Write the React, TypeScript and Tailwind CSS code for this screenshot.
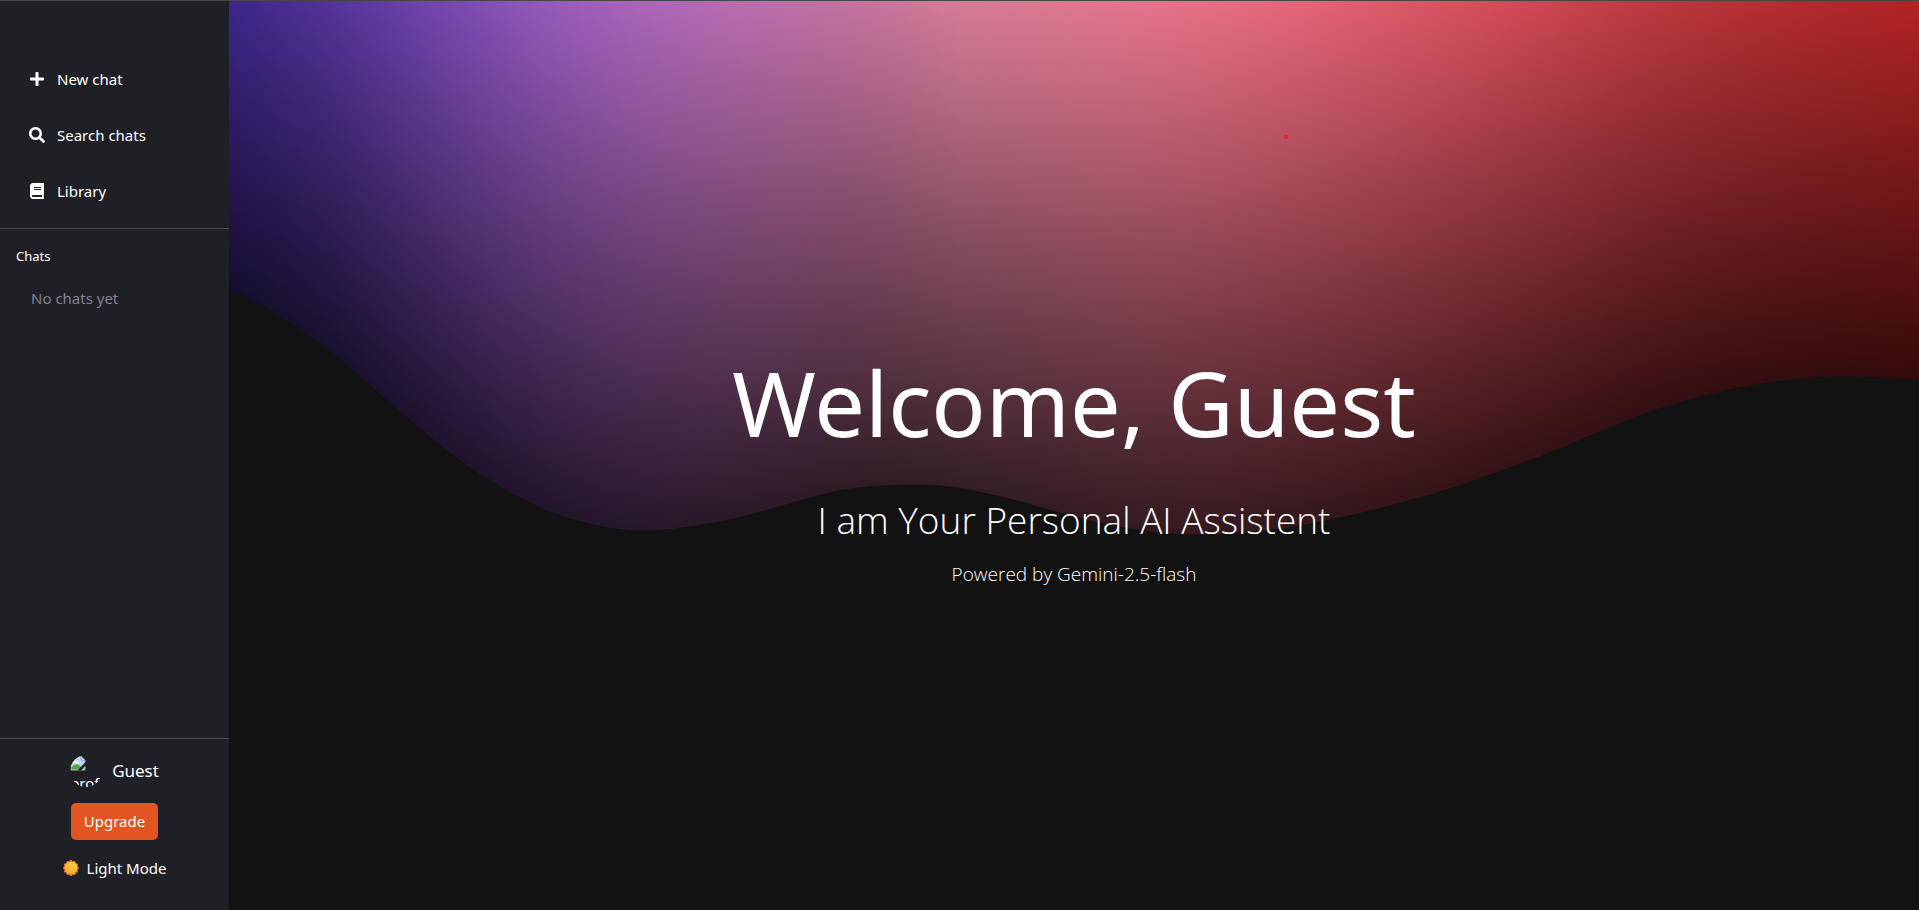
import React from "react";
import { FaBook, FaPlus, FaSearch } from "react-icons/fa";

const VIEW_W = 1919;
const VIEW_H = 910;
const BAND = 3;

// Lower edge of the aurora, left to right.
const EDGE: [number, number][] = [
  [0, 262], [60, 258], [120, 260], [180, 271], [229, 289], [253, 300], [287, 320],
  [327, 348], [370, 385], [420, 428], [470, 467], [520, 497], [570, 518],
  [637, 530], [720, 521], [800, 500], [833, 491], [867, 486], [910, 484],
  [950, 486], [983, 492], [1017, 500], [1067, 514], [1120, 526], [1197, 534],
  [1300, 525], [1430, 494], [1537, 457], [1600, 431], [1650, 411], [1700, 396],
  [1750, 385], [1800, 378], [1850, 376], [1919, 379],
];

// Smooth curve through the edge points, closed far above the view's top.
function wavePath(points: [number, number][]) {
  const at = (i: number) => points[Math.max(0, Math.min(points.length - 1, i))];
  let d = `M0 -20 V${points[0][1]}`;
  for (let i = 0; i < points.length - 1; i++) {
    const [x0, y0] = at(i - 1);
    const [x1, y1] = at(i);
    const [x2, y2] = at(i + 1);
    const [x3, y3] = at(i + 2);
    const s1 = (y2 - y0) / (x2 - x0);
    const s2 = (y3 - y1) / (x3 - x1);
    const t = (x2 - x1) / 3;
    d += ` C${x1 + t} ${y1 + s1 * t} ${x2 - t} ${y2 - s2 * t} ${x2} ${y2}`;
  }
  return `${d} V-1000 H0 Z`;
}

const WAVE = wavePath(EDGE);
const BANDS = Array.from({ length: 180 }, (_, i) => i * BAND);

function Aurora() {
  return (
    <svg
      className="absolute inset-0 h-full w-full"
      viewBox={`0 0 ${VIEW_W} ${VIEW_H}`}
      preserveAspectRatio="none"
      aria-hidden="true"
    >
      <defs>
        <linearGradient id="ramp" x1="0" x2="1" y1="0" y2="0">
          <stop offset="0" stopColor="#3a29ff" />
          <stop offset="0.5" stopColor="#ff94b4" />
          <stop offset="1" stopColor="#ff3232" />
        </linearGradient>
        <path id="wave" d={WAVE} />
        <mask id="glow" maskUnits="userSpaceOnUse" x="0" y="0" width={VIEW_W} height={VIEW_H}>
          {BANDS.map((s) => {
            const level = Math.round((0.2 + (1.2 * (s + BAND / 2)) / VIEW_H) * 255);
            return <use key={s} href="#wave" y={-s} fill={`rgb(${level},${level},${level})`} />;
          })}
        </mask>
      </defs>
      <use href="#wave" fill="#000" />
      <rect width={VIEW_W} height={VIEW_H} fill="url(#ramp)" mask="url(#glow)" />
    </svg>
  );
}

function BrokenImage() {
  return (
    <svg className="block size-4" viewBox="0 0 16 16" aria-hidden="true">
      <path d="M1 1h10l4 4v10H1z" fill="#c3d5f7" stroke="#a9b0b8" />
      <path d="M11 1v4h4z" fill="#fff" stroke="#8d9299" />
      <path d="M3.5 7.5a1.8 1.8 0 0 1 3-1.2 2 2 0 0 1 2.5 2H3.5z" fill="#fff" />
      <path d="M1.5 14.5v-2C4 8.5 8 8.5 10 11l4.5 3.5z" fill="#56a83c" />
      <path d="M16 6.5 7.5 15.5H11l5-5z" fill="#1f2025" />
      <path d="M15 11v4h-3.5z" fill="#a9b0b8" />
    </svg>
  );
}

function Sun() {
  const petals = Array.from({ length: 12 }, (_, i) => (i * Math.PI) / 6);
  return (
    <svg className="size-4" viewBox="0 0 16 16" aria-hidden="true">
      <defs>
        <linearGradient id="sun" x1="0.8" y1="0.1" x2="0.3" y2="1">
          <stop offset="0" stopColor="#ffd23c" />
          <stop offset="1" stopColor="#eda62f" />
        </linearGradient>
      </defs>
      {petals.map((a) => (
        <circle key={a} cx={8 + 6.2 * Math.cos(a)} cy={8 + 6.2 * Math.sin(a)} r="1.7" fill="#ee7f33" />
      ))}
      <circle cx="8" cy="8" r="6.2" fill="url(#sun)" />
    </svg>
  );
}

const NAV = [
  { label: "New chat", Icon: FaPlus },
  { label: "Search chats", Icon: FaSearch },
  { label: "Library", Icon: FaBook },
];

function Sidebar() {
  return (
    <aside className="relative flex w-[229px] shrink-0 flex-col bg-[#1f2025]">
      <nav className="flex flex-col gap-4 border-b border-[#4c4d51] px-5 pt-[58px] pb-[17px]">
        {NAV.map(({ label, Icon }) => (
          <button key={label} type="button" className="flex h-10 items-center gap-[11px] px-2 text-left">
            <span className="flex w-[18px] justify-center">
              <Icon className="size-4" />
            </span>
            {label}
          </button>
        ))}
      </nav>
      <section className="flex-1 px-4 pt-[15px]">
        <h2 className="text-[13px] leading-6">Chats</h2>
        <p className="px-[15px] pt-4 leading-7 text-[#7f8098]">No chats yet</p>
      </section>
      <footer className="flex flex-col items-center border-t border-[#4c4d51] pt-4 pb-[30px]">
        <div className="flex items-center gap-[10px]">
          <div className="size-8 overflow-hidden rounded-full">
            <BrokenImage />
            <span className="block leading-6">prof</span>
          </div>
          <span className="text-[17px] leading-8">Guest</span>
        </div>
        <button type="button" className="mt-4 h-[37px] rounded-[5px] bg-[#e25420] px-[13px]">
          Upgrade
        </button>
        <button type="button" className="mt-4 flex h-6 items-center gap-2">
          <Sun />
          Light Mode
        </button>
      </footer>
    </aside>
  );
}

export default function App() {
  return (
    <div className="relative flex min-h-screen border-t border-[#434846] bg-[#121212] font-['Noto_Sans','Open_Sans',sans-serif] text-[15px] text-white">
      <Aurora />
      <Sidebar />
      <main className="relative flex flex-1 flex-col items-center justify-center pt-5 text-center">
        <h1 className="text-[90px] leading-[120px]">Welcome, Guest</h1>
        <p className="mt-7 font-['Open_Sans',sans-serif] text-[37px] leading-[60px] font-light">
          I am Your Personal AI Assistent
        </p>
        <p className="mt-2 font-['Open_Sans',sans-serif] text-[19px] leading-8 font-light">
          Powered by Gemini-2.5-flash
        </p>
      </main>
      <span className="absolute top-[134px] left-[66.9%] size-1 rounded-full bg-[#e3202a]" />
    </div>
  );
}
